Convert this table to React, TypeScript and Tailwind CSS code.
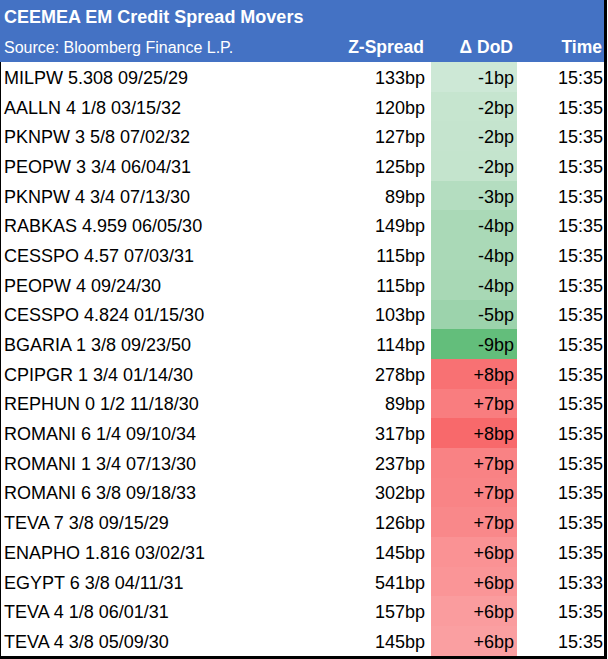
type Row = { name: string; spread: string; delta: string; time: string; bg: string };

const ROWS: Row[] = [
  { name: 'MILPW 5.308 09/25/29', spread: '133bp', delta: '-1bp', time: '15:35', bg: 'bg-[#cde8d6]' },
  { name: 'AALLN 4 1/8 03/15/32', spread: '120bp', delta: '-2bp', time: '15:35', bg: 'bg-[#c6e5cf]' },
  { name: 'PKNPW 3 5/8 07/02/32', spread: '127bp', delta: '-2bp', time: '15:35', bg: 'bg-[#c5e4ce]' },
  { name: 'PEOPW 3 3/4 06/04/31', spread: '125bp', delta: '-2bp', time: '15:35', bg: 'bg-[#c4e4cd]' },
  { name: 'PKNPW 4 3/4 07/13/30', spread: '89bp', delta: '-3bp', time: '15:35', bg: 'bg-[#b4ddc0]' },
  { name: 'RABKAS 4.959 06/05/30', spread: '149bp', delta: '-4bp', time: '15:35', bg: 'bg-[#aad9b7]' },
  { name: 'CESSPO 4.57 07/03/31', spread: '115bp', delta: '-4bp', time: '15:35', bg: 'bg-[#aad9b7]' },
  { name: 'PEOPW 4 09/24/30', spread: '115bp', delta: '-4bp', time: '15:35', bg: 'bg-[#a8d8b5]' },
  { name: 'CESSPO 4.824 01/15/30', spread: '103bp', delta: '-5bp', time: '15:35', bg: 'bg-[#9cd3ac]' },
  { name: 'BGARIA 1 3/8 09/23/50', spread: '114bp', delta: '-9bp', time: '15:35', bg: 'bg-[#63be7b]' },
  { name: 'CPIPGR 1 3/4 01/14/30', spread: '278bp', delta: '+8bp', time: '15:35', bg: 'bg-[#f87173]' },
  { name: 'REPHUN 0 1/2 11/18/30', spread: '89bp', delta: '+7bp', time: '15:35', bg: 'bg-[#f97d7f]' },
  { name: 'ROMANI 6 1/4 09/10/34', spread: '317bp', delta: '+8bp', time: '15:35', bg: 'bg-[#f8696b]' },
  { name: 'ROMANI 1 3/4 07/13/30', spread: '237bp', delta: '+7bp', time: '15:35', bg: 'bg-[#f98284]' },
  { name: 'ROMANI 6 3/8 09/18/33', spread: '302bp', delta: '+7bp', time: '15:35', bg: 'bg-[#f98486]' },
  { name: 'TEVA 7 3/8 09/15/29', spread: '126bp', delta: '+7bp', time: '15:35', bg: 'bg-[#f9888a]' },
  { name: 'ENAPHO 1.816 03/02/31', spread: '145bp', delta: '+6bp', time: '15:35', bg: 'bg-[#fa9294]' },
  { name: 'EGYPT 6 3/8 04/11/31', spread: '541bp', delta: '+6bp', time: '15:33', bg: 'bg-[#fa9597]' },
  { name: 'TEVA 4 1/8 06/01/31', spread: '157bp', delta: '+6bp', time: '15:35', bg: 'bg-[#fa9c9e]' },
  { name: 'TEVA 4 3/8 05/09/30', spread: '145bp', delta: '+6bp', time: '15:35', bg: 'bg-[#fa9fa1]' },
];

const COLS = 'grid grid-cols-[339px_91px_86px_87px]';

export default function App() {
  return (
    <div className="w-[607px] h-[659px] bg-white border-r-[3px] border-b-[3px] border-black font-['Liberation_Sans',Arial,sans-serif] text-black">
      {/* Header */}
      <div className="bg-[#4472c4] text-white">
        <div className="h-[32px] flex items-center pl-[4px] pt-[1px] text-[18px] font-bold leading-none">
          CEEMEA EM Credit Spread Movers
        </div>
        <div className={`${COLS} h-[30px] items-center pt-[2px] text-[16px] leading-none`}>
          <div className="pl-[4px]">Source: Bloomberg Finance L.P.</div>
          <div className="text-right pr-[6px] text-[17.5px] font-bold">Z-Spread</div>
          <div className="text-right pr-[3px] text-[17.5px] font-bold">Δ DoD</div>
          <div className="text-right pr-[1px] text-[17.5px] font-bold">Time</div>
        </div>
      </div>

      {/* Rows */}
      <div className="border-l border-black">
        {ROWS.map((r) => (
          <div key={r.name} className={`${COLS} h-[29.7px] items-stretch text-[18px] leading-none`}>
            <div className="flex items-center pl-[3px] pt-[2px] whitespace-nowrap">{r.name}</div>
            <div className="flex items-center justify-end pr-[6px] pt-[2px]">{r.spread}</div>
            <div className={`flex items-center justify-end pr-[3px] pt-[2px] ${r.bg}`}>{r.delta}</div>
            <div className="flex items-center justify-end pr-[1px] pt-[2px]">{r.time}</div>
          </div>
        ))}
      </div>
    </div>
  );
}
